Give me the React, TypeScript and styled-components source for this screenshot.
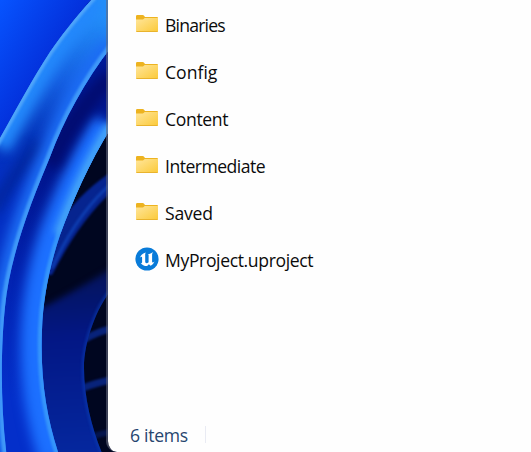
import React from "react";
import styled, { createGlobalStyle } from "styled-components";

const GlobalStyle = createGlobalStyle`
  body { margin: 0; overflow: hidden; }
  *, *::before, *::after { box-sizing: border-box; }
`;

const Desktop = styled.main`
  position: relative;
  display: flex;
  width: 531px;
  height: 452px;
  padding-left: 106px;
  overflow: hidden;
  background: #001060;
  font-family: "Segoe UI", "Open Sans", "Noto Sans", sans-serif;
`;

const WallpaperArt = styled.svg`
  position: absolute;
  left: 0;
  top: 0;
`;

const ExplorerWindow = styled.section`
  position: relative;
  display: flex;
  flex: 1;
  flex-direction: column;
  justify-content: space-between;
  border-left: 2px solid rgba(100, 105, 125, 0.6);
  border-bottom-left-radius: 11px;
  background: #fefefe;
  background-clip: padding-box;
`;

const FileList = styled.ul`
  display: flex;
  flex-direction: column;
  margin: 0;
  padding: 2px 0 0 27px;
  list-style: none;
`;

const FileRow = styled.li`
  display: flex;
  align-items: center;
  gap: 6px;
  height: 47px;
`;

const IconSlot = styled.span`
  display: flex;
  width: 24px;
  height: 24px;
  margin-top: -4px;
`;

const FileName = styled.span<{ $tracking: number }>`
  margin-top: -2px;
  color: #0b0b0b;
  font-size: 17.6px;
  line-height: 24px;
  letter-spacing: ${(p) => p.$tracking}px;
  white-space: nowrap;
`;

const StatusBar = styled.footer`
  display: flex;
  align-items: center;
  gap: 17px;
  height: 33px;
  padding-left: 22px;
`;

const ItemCount = styled.span`
  margin-top: -2px;
  color: #26456f;
  font-size: 17.6px;
  line-height: 24px;
  letter-spacing: -0.28px;
`;

const Separator = styled.span`
  width: 1px;
  height: 17px;
  margin-top: -2px;
  background: #e9ebf3;
`;

const FolderIcon = () => (
  <svg width="24" height="24" viewBox="0 0 24 24">
    <defs>
      <linearGradient id="folderFront" x1="0" y1="0" x2="1" y2="1">
        <stop offset="0" stopColor="#ffe69c" />
        <stop offset="1" stopColor="#fbc937" />
      </linearGradient>
    </defs>
    <path d="M1 4.2Q1 3 2.2 3H7.6Q8.4 3 8.9 3.6L10 5H22Q23 5 23 6V10H1Z" fill="#edb320" />
    <path d="M1 7.4H8L9.7 6H23V19Q23 20 22 20H2Q1 20 1 19Z" fill="url(#folderFront)" />
    <path d="M1.4 19.5H22.6" stroke="#e9b32d" strokeWidth="1" />
  </svg>
);

const UnrealIcon = () => (
  <svg width="24" height="24" viewBox="0 0 24 24">
    <circle cx="12" cy="12" r="11.6" fill="#087bd9" />
    <path
      d="M4.8 10.8C6 7.7 8.1 5.8 11.1 5.4C10.3 6 10.2 6.6 10.2 7.5V14.5C10.2 15.7 10.9 16.4 12 16.2C12.7 16.1 13.2 15.8 13.6 15.3V8.2C13.6 7.5 13.2 7.3 12.7 7.1C14.6 6.8 16.7 6.1 18.3 4.9C17.5 5.9 17.1 6.6 17.1 7.6V14.5C17.1 15.3 17.5 15.6 18.1 15.4C18.6 15.2 19 14.9 19.5 14.4C18.8 16.3 17.4 17.8 15.6 18.7L13.9 17.2L12.1 19.1C9.1 19.1 6.9 17.9 5.7 16C6.7 16.4 7.1 16 7.1 15V10.5C7.1 9.2 5.9 9.5 4.8 10.8Z"
      fill="#fff"
    />
  </svg>
);

const outerEdge = "M94 -3C75 18 61 36 50 52C31 81 15 112 -4 145";
const middleEdge = "M112 46C84 82 64 120 50 157C32 200 10 255 5 307C1 345 0 405 7 458";
const innerEdge = "M112 126C88 165 73 200 60 235C49 268 43 300 42 330C40 380 47 420 60 458";
const coreEdge = "M112 289C97 307 84 341 84 368C84 400 93 432 104 458";

const Wallpaper = () => (
  <WallpaperArt width="116" height="452" viewBox="0 0 116 452">
    <defs>
      <linearGradient id="sky" x1="0" y1="0" x2="80" y2="50" gradientUnits="userSpaceOnUse">
        <stop offset="0" stopColor="#0754ff" />
        <stop offset="1" stopColor="#0227d2" />
      </linearGradient>
      <linearGradient id="outerFill" x1="90" y1="10" x2="30" y2="190" gradientUnits="userSpaceOnUse">
        <stop offset="0" stopColor="#238ff9" />
        <stop offset="0.4" stopColor="#155fe2" />
        <stop offset="0.75" stopColor="#0434ba" />
        <stop offset="1" stopColor="#0430c4" />
      </linearGradient>
      <linearGradient id="innerFill" x1="105" y1="65" x2="20" y2="400" gradientUnits="userSpaceOnUse">
        <stop offset="0" stopColor="#011a98" />
        <stop offset="0.3" stopColor="#01148a" />
        <stop offset="0.65" stopColor="#0222b0" />
        <stop offset="1" stopColor="#042fca" />
      </linearGradient>
      <linearGradient id="coreFill" x1="65" y1="275" x2="75" y2="452" gradientUnits="userSpaceOnUse">
        <stop offset="0" stopColor="#04145c" />
        <stop offset="0.35" stopColor="#031785" />
        <stop offset="1" stopColor="#05279e" />
      </linearGradient>
      <clipPath id="outerClip">
        <path d={`${middleEdge}H-5V145H-4C15 112 31 81 50 52C61 36 75 18 94 -3H112Z`} />
      </clipPath>
      <clipPath id="innerClip"><path d={`${innerEdge}H-5V-5H112Z`} /></clipPath>
      <clipPath id="coreClip"><path d={`${coreEdge}H35V190H112Z`} /></clipPath>
      <filter id="soft1" filterUnits="userSpaceOnUse" x="-40" y="-40" width="200" height="540" colorInterpolationFilters="sRGB"><feGaussianBlur stdDeviation="1.2" /></filter>
      <filter id="soft3" filterUnits="userSpaceOnUse" x="-40" y="-40" width="200" height="540" colorInterpolationFilters="sRGB"><feGaussianBlur stdDeviation="3" /></filter>
      <filter id="soft5" filterUnits="userSpaceOnUse" x="-40" y="-40" width="200" height="540" colorInterpolationFilters="sRGB"><feGaussianBlur stdDeviation="6" /></filter>
    </defs>
    <rect width="116" height="452" fill="#000620" />
    <g fill="none" stroke="#0a2b91" filter="url(#soft1)">
      <path d="M82 341Q97 331 116 328" strokeWidth="7" opacity="0.8" />
      <path d="M80 389Q98 382 116 379" strokeWidth="7" opacity="0.8" />
      <path d="M88 438Q102 433 116 431" strokeWidth="6" opacity="0.4" />
    </g>
    <g clipPath="url(#coreClip)">
      <path d="M30 314Q75 292 125 260V470H30Z" fill="url(#coreFill)" filter="url(#soft3)" />
      <path d={coreEdge} fill="none" stroke="#0b3fb2" strokeWidth="5" filter="url(#soft1)" opacity="0.5" />
    </g>
    <path d="M116 169C95 182 76 199 62 220L44 275L52 275C68 244 88 212 116 188Z" fill="#06248f" filter="url(#soft1)" />
    <path d="M114 181C87 204 68 233 52 268" fill="none" stroke="#0d3caf" strokeWidth="3" filter="url(#soft1)" />
    <g clipPath="url(#innerClip)">
      <path d={`${innerEdge}H-5V-5H112Z`} fill="url(#innerFill)" />
      <path d={innerEdge} fill="none" stroke="#1c70ff" strokeWidth="42" filter="url(#soft5)" />
      <path d="M112 75C84 105 66 129 50 165" fill="none" stroke="#010c70" strokeWidth="18" filter="url(#soft5)" />
      <path d={innerEdge} fill="none" stroke="#3595fa" strokeWidth="8" filter="url(#soft1)" />
      <path d="M112 126C88 165 73 200 60 235" fill="none" stroke="#409ef8" strokeWidth="14" filter="url(#soft3)" />
    </g>
    <path d="M-4 -4H94C75 18 61 36 50 52C31 81 15 112 -4 145Z" fill="url(#sky)" />
    <g clipPath="url(#outerClip)">
      <rect x="-5" y="-5" width="120" height="465" fill="url(#outerFill)" />
      <path d={outerEdge} fill="none" stroke="#2388fb" strokeWidth="30" filter="url(#soft5)" />
      <path d="M40 145C26 160 12 178 -8 212" fill="none" stroke="#022394" strokeWidth="13" filter="url(#soft5)" opacity="0.8" />
      <path d={middleEdge} fill="none" stroke="#1c6cf4" strokeWidth="24" filter="url(#soft5)" />
      <path d={outerEdge} fill="none" stroke="#50a5fa" strokeWidth="6" filter="url(#soft1)" />
      <path d={middleEdge} fill="none" stroke="#3f98f8" strokeWidth="8" filter="url(#soft1)" />
    </g>
  </WallpaperArt>
);

const files = [
  { name: "Binaries", tracking: -0.8 },
  { name: "Config", tracking: 0 },
  { name: "Content", tracking: -0.35 },
  { name: "Intermediate", tracking: -0.52 },
  { name: "Saved", tracking: -0.2 },
  { name: "MyProject.uproject", tracking: -0.38, unreal: true },
];

export default function App() {
  return (
    <>
      <GlobalStyle />
      <Desktop>
        <Wallpaper />
        <ExplorerWindow>
          <FileList>
            {files.map((file) => (
              <FileRow key={file.name}>
                <IconSlot>{file.unreal ? <UnrealIcon /> : <FolderIcon />}</IconSlot>
                <FileName $tracking={file.tracking}>{file.name}</FileName>
              </FileRow>
            ))}
          </FileList>
          <StatusBar>
            <ItemCount>6 items</ItemCount>
            <Separator />
          </StatusBar>
        </ExplorerWindow>
      </Desktop>
    </>
  );
}
